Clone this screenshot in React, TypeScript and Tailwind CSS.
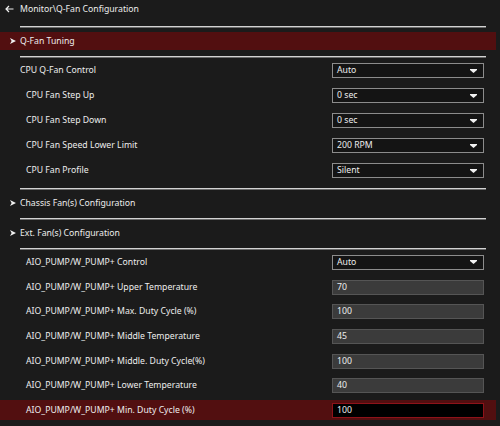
import React from 'react';

const Divider: React.FC = () => (
  <div className="ml-[20px] w-[466px] h-[2px] border-t border-[#d2d2d2] border-b border-b-[#6a6a6a]" />
);

const Caret: React.FC = () => (
  <svg width="7" height="4" viewBox="0 0 7 4" className="mr-[6px]">
    <path d="M0 0 H7 V1 L3.5 4 L0 1 Z" fill="#f2f2f2" />
  </svg>
);

const Chevron: React.FC = () => (
  <svg width="6" height="6" viewBox="0 0 6 6" className="ml-[10px] mr-[4px]">
    <path d="M0 0 L6 3 L0 6 L1.6 3 Z" fill="#f0f0f0" />
  </svg>
);

const Select: React.FC<{ value: string }> = ({ value }) => (
  <div className="w-[152px] h-[15px] border border-[#8c8c8c] bg-[#141414] flex items-center justify-between pl-[4px]">
    <span>{value}</span>
    <Caret />
  </div>
);

const Field: React.FC<{ value: string; active?: boolean }> = ({ value, active }) =>
  active ? (
    <div className="w-[152px] h-[15px] border border-[#8e1219] bg-black flex items-center pl-[4px]">
      <span>{value}</span>
    </div>
  ) : (
    <div className="w-[152px] h-[15px] border border-[#555555] bg-[#3b3b3b] flex items-center pl-[4px]">
      <span>{value}</span>
    </div>
  );

const Row: React.FC<{ label: string; indent?: boolean; tall?: boolean; children: React.ReactNode }> = ({
  label,
  indent,
  tall,
  children,
}) => (
  <div className={`${tall ? 'h-[25px]' : 'h-[24.7px]'} flex items-center`}>
    <span className={`${indent ? 'pl-[26px]' : 'pl-[20px]'} flex-1`}>{label}</span>
    <div className="w-[168px]">{children}</div>
  </div>
);

const cpuRows = [
  { label: 'CPU Fan Step Up', value: '0 sec' },
  { label: 'CPU Fan Step Down', value: '0 sec' },
  { label: 'CPU Fan Speed Lower Limit', value: '200 RPM' },
  { label: 'CPU Fan Profile', value: 'Silent' },
];

const pumpRows = [
  { label: 'AIO_PUMP/W_PUMP+ Upper Temperature', value: '70' },
  { label: 'AIO_PUMP/W_PUMP+ Max. Duty Cycle (%)', value: '100' },
  { label: 'AIO_PUMP/W_PUMP+ Middle Temperature', value: '45' },
  { label: 'AIO_PUMP/W_PUMP+ Middle. Duty Cycle(%)', value: '100' },
  { label: 'AIO_PUMP/W_PUMP+ Lower Temperature', value: '40' },
];

export default function App() {
  return (
    <div
      className="w-[500px] h-[426px] overflow-hidden bg-[#1b1b1b] text-[#ededed] text-[8.7px] leading-none"
      style={{ fontFamily: '"Noto Sans", "Open Sans", sans-serif' }}
    >
      <div className="h-[18px] flex items-center">
        <svg width="9" height="8" viewBox="0 0 9 8" className="ml-[5px] mr-[6px]">
          <path d="M8.5 4 H1 M4 1 L1 4 L4 7" stroke="#f0f0f0" strokeWidth="1.2" fill="none" />
        </svg>
        <span>Monitor\Q-Fan Configuration</span>
      </div>
      <div className="mt-[8px]">
        <Divider />
      </div>
      <div className="mt-[4px] w-[496px] h-[18px] bg-[#520f10] flex items-center">
        <Chevron />
        <span>Q-Fan Tuning</span>
      </div>
      <div className="mt-[6px]">
        <Divider />
      </div>
      <Row label="CPU Q-Fan Control" tall>
        <Select value="Auto" />
      </Row>
      {cpuRows.map((r) => (
        <Row key={r.label} label={r.label} indent tall>
          <Select value={r.value} />
        </Row>
      ))}
      <div className="mt-[5px]">
        <Divider />
      </div>
      <div className="h-[26px] flex items-center">
        <Chevron />
        <span>Chassis Fan(s) Configuration</span>
      </div>
      <div className="mt-[2px]">
        <Divider />
      </div>
      <div className="h-[26px] flex items-center">
        <Chevron />
        <span>Ext. Fan(s) Configuration</span>
      </div>
      <div className="mt-[2px]">
        <Divider />
      </div>
      <Row label="AIO_PUMP/W_PUMP+ Control" indent>
        <Select value="Auto" />
      </Row>
      {pumpRows.map((r) => (
        <Row key={r.label} label={r.label} indent>
          <Field value={r.value} />
        </Row>
      ))}
      <div className="h-[24.7px] flex items-center">
        <div className="w-[496px] h-[20px] bg-[#520f10] flex items-center">
          <span className="pl-[26px] flex-1">AIO_PUMP/W_PUMP+ Min. Duty Cycle (%)</span>
          <div className="w-[164px]">
            <Field value="100" active />
          </div>
        </div>
      </div>
    </div>
  );
}
